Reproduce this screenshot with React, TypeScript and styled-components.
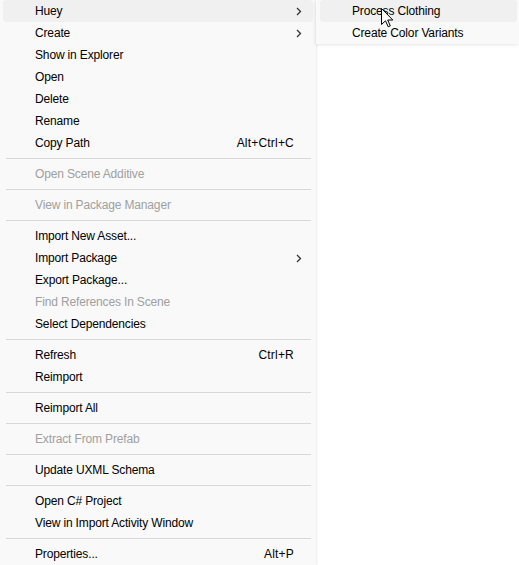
import React from "react";
import styled, { createGlobalStyle } from "styled-components";

const Global = createGlobalStyle`
  html, body { margin: 0; padding: 0; background: #ffffff; }
  body { font-family: "Liberation Sans", Arial, sans-serif; font-size: 12px; color: #000; }
`;

const Stage = styled.div`
  position: relative;
  width: 519px;
  height: 565px;
  overflow: hidden;
  background: #ffffff;
`;

const Menu = styled.div`
  width: 316px;
  background: #f9f9f9;
  display: flex;
  flex-direction: column;
  padding: 0 3px;
  box-sizing: border-box;
  box-shadow: 1px 0 2px rgba(0, 0, 0, 0.08);
`;

const SubMenu = styled.div`
  position: absolute;
  left: 316px;
  top: 0;
  width: 203px;
  height: 44px;
  background: #f9f9f9;
  display: flex;
  flex-direction: column;
  padding: 0 2px 0 4px;
  box-sizing: border-box;
  box-shadow: -1px 1px 3px rgba(0, 0, 0, 0.1);
`;

const Row = styled.div<{ $active?: boolean; $disabled?: boolean; $indent: number }>`
  height: 22px;
  display: flex;
  align-items: center;
  padding-left: ${(p) => p.$indent}px;
  padding-right: 8px;
  border-radius: 4px;
  background: ${(p) => (p.$active ? "#f0f0f0" : "transparent")};
  color: ${(p) => (p.$disabled ? "#a0a0a0" : "#000000")};
  white-space: nowrap;
  letter-spacing: -0.15px;
`;

const Label = styled.span`
  flex: 1;
`;

const Shortcut = styled.span`
  margin-right: 11px;
  letter-spacing: 0.2px;
`;

const Chevron = styled.svg`
  width: 6px;
  height: 9px;
  margin-right: 3px;
`;

const Separator = styled.div`
  height: 1px;
  margin: 4px 2px 4px 3px;
  background: #d8d8d8;
`;

const Cursor = styled.svg`
  position: absolute;
  left: 381px;
  top: 8px;
  width: 13px;
  height: 20px;
`;

type Item =
  | { sep: true }
  | { label: string; shortcut?: string; sub?: boolean; disabled?: boolean; active?: boolean };

const items: Item[] = [
  { label: "Huey", sub: true, active: true },
  { label: "Create", sub: true },
  { label: "Show in Explorer" },
  { label: "Open" },
  { label: "Delete" },
  { label: "Rename" },
  { label: "Copy Path", shortcut: "Alt+Ctrl+C" },
  { sep: true },
  { label: "Open Scene Additive", disabled: true },
  { sep: true },
  { label: "View in Package Manager", disabled: true },
  { sep: true },
  { label: "Import New Asset..." },
  { label: "Import Package", sub: true },
  { label: "Export Package..." },
  { label: "Find References In Scene", disabled: true },
  { label: "Select Dependencies" },
  { sep: true },
  { label: "Refresh", shortcut: "Ctrl+R" },
  { label: "Reimport" },
  { sep: true },
  { label: "Reimport All" },
  { sep: true },
  { label: "Extract From Prefab", disabled: true },
  { sep: true },
  { label: "Update UXML Schema" },
  { sep: true },
  { label: "Open C# Project" },
  { label: "View in Import Activity Window" },
  { sep: true },
  { label: "Properties...", shortcut: "Alt+P" },
];

const ChevronIcon = () => (
  <Chevron viewBox="0 0 6 9">
    <path d="M1 1 L4.5 4.5 L1 8" fill="none" stroke="#333" strokeWidth="1.3" />
  </Chevron>
);

export default function App() {
  return (
    <Stage>
      <Global />
      <Menu>
        {items.map((it, i) =>
          "sep" in it ? (
            <Separator key={i} />
          ) : (
            <Row key={i} $indent={32} $active={it.active} $disabled={it.disabled}>
              <Label>{it.label}</Label>
              {it.shortcut && <Shortcut>{it.shortcut}</Shortcut>}
              {it.sub && <ChevronIcon />}
            </Row>
          )
        )}
      </Menu>
      <SubMenu>
        <Row $indent={32} $active>
          <Label>Process Clothing</Label>
        </Row>
        <Row $indent={32}>
          <Label>Create Color Variants</Label>
        </Row>
      </SubMenu>
      <Cursor viewBox="0 0 13 20">
        <path
          d="M0.5 0.5 L0.5 16.5 L4.5 12.8 L7.2 18.8 L9.3 17.9 L6.7 12 L11.8 12 Z"
          fill="#ffffff"
          stroke="#000000"
          strokeWidth="1"
          strokeLinejoin="round"
        />
      </Cursor>
    </Stage>
  );
}
